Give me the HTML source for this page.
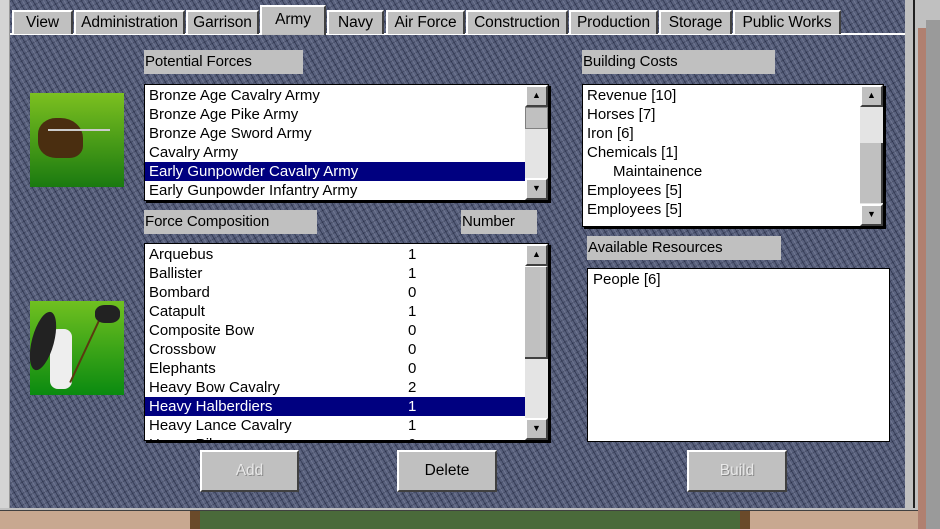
<!DOCTYPE html>
<html><head><meta charset="utf-8"><style>
*{box-sizing:border-box;margin:0;padding:0}
body{width:940px;height:529px;overflow:hidden;position:relative;background:#c0c0c0;font-family:"Liberation Sans",Arial,sans-serif;font-size:15px;color:#000}
.a{position:absolute}
.tex{background:#59617d;
background-image:repeating-linear-gradient(60deg,rgba(25,30,55,.5) 0 1px,transparent 1px 3px,rgba(150,155,180,.35) 3px 4px,transparent 4px 6px),repeating-linear-gradient(-30deg,rgba(20,25,45,.3) 0 1px,transparent 1px 5px)}
.panel{left:10px;top:33px;width:895px;height:477px;border-top:2px solid #fff}
.tab{top:10px;height:24px;background:#c0c0c0;border-top:2px solid #fff;border-left:2px solid #fff;border-right:2px solid #404040;text-align:center;line-height:21px;font-size:15.5px;letter-spacing:-.1px}
.lbl{background:#c0c0c0;height:24px;line-height:23px;padding-left:1px;letter-spacing:-.1px}
.list{background:#fff;border:1px solid #000;box-shadow:2px 2px 0 #000;overflow:hidden}
.row{height:19px;line-height:19px;padding-left:4px;white-space:nowrap;letter-spacing:0;position:relative}
.sel{background:#000080;color:#fff}
.sb{position:absolute;right:0;top:0;bottom:0;width:23px;background:#e4e4e4}
.btnx{position:absolute;left:0;width:23px;height:22px;background:#c0c0c0;border-top:2px solid #fff;border-left:2px solid #fff;border-right:2px solid #404040;border-bottom:2px solid #404040;font-size:9px;text-align:center;line-height:17px}
.btn{background:#c0c0c0;border-top:2px solid #fff;border-left:2px solid #fff;border-right:2px solid #404040;border-bottom:2px solid #404040;text-align:center;line-height:37px;font-size:15.5px}
.num{position:absolute;left:263px;top:0}
</style></head><body>
<div class="a" style="left:0;top:0;width:10px;height:510px;background:#d4d4d4;border-right:1px solid #999"></div>
<div class="a tex" style="left:10px;top:0;width:895px;height:34px"></div>
<div class="a panel tex"></div>
<div class="a tab" style="left:12px;width:61px">View</div>
<div class="a tab" style="left:74px;width:111px">Administration</div>
<div class="a tab" style="left:186px;width:73px">Garrison</div>
<div class="a tab" style="left:260px;width:66px;top:5px;height:30px;line-height:26px">Army</div>
<div class="a tab" style="left:327px;width:57px">Navy</div>
<div class="a tab" style="left:386px;width:79px">Air Force</div>
<div class="a tab" style="left:466px;width:102px">Construction</div>
<div class="a tab" style="left:569px;width:89px">Production</div>
<div class="a tab" style="left:659px;width:73px">Storage</div>
<div class="a tab" style="left:733px;width:108px">Public Works</div>
<div class="a" style="left:905px;top:0;width:10px;height:510px;background:#c0c0c0;border-right:2px solid #202020"></div>
<div class="a" style="left:915px;top:0;width:25px;height:529px;background:#c0c0c0"></div>
<div class="a" style="left:918px;top:28px;width:8px;height:501px;background:#b08070"></div>
<div class="a" style="left:926px;top:20px;width:14px;height:509px;background:#9a9a9a"></div>
<div class="a" style="left:0;top:510px;width:918px;height:19px;background:linear-gradient(90deg,#c8a890 0 190px,#6a4a2a 190px 200px,#4a6a3a 200px 740px,#6a4a2a 740px 750px,#c8a890 750px)"></div>
<div class="a" style="left:0;top:508px;width:918px;height:3px;background:#c0c0c0;border-bottom:1px solid #404040"></div>

<div class="a" style="left:30px;top:93px;width:94px;height:94px;background:linear-gradient(#7cc020,#1a7a10)"><div class="a" style="left:8px;top:25px;width:45px;height:40px;background:#4a2e10;border-radius:40% 50% 30% 40%"></div><div class="a" style="left:18px;top:36px;width:62px;height:2px;background:#ccc"></div></div>
<div class="a" style="left:30px;top:301px;width:94px;height:94px;background:linear-gradient(#70c020,#0a8a10)"><div class="a" style="left:20px;top:28px;width:22px;height:60px;background:#eee;border-radius:8px"></div><div class="a" style="left:2px;top:10px;width:22px;height:60px;background:#222;border-radius:50%;transform:rotate(15deg)"></div><div class="a" style="left:55px;top:10px;width:2px;height:75px;background:#5a3a10;transform:rotate(25deg)"></div><div class="a" style="left:65px;top:4px;width:25px;height:18px;background:#222;border-radius:40%"></div></div>

<div class="a lbl" style="left:144px;top:50px;width:159px">Potential Forces</div>
<div class="a list" style="left:144px;top:84px;width:405px;height:117px;padding-top:1px">
<div class="row">Bronze Age Cavalry Army</div><div class="row">Bronze Age Pike Army</div><div class="row">Bronze Age Sword Army</div><div class="row">Cavalry Army</div><div class="row sel" style="width:380px">Early Gunpowder Cavalry Army</div><div class="row">Early Gunpowder Infantry Army</div>
<div class="sb"><div class="btnx" style="top:0">▲</div><div class="a" style="left:0;top:22px;width:23px;height:22px;background:#c0c0c0;border:1px solid #808080"></div><div class="btnx" style="bottom:0">▼</div></div></div>

<div class="a lbl" style="left:144px;top:210px;width:173px">Force Composition</div>
<div class="a lbl" style="left:461px;top:210px;width:76px">Number</div>
<div class="a list" style="left:144px;top:243px;width:405px;height:198px;padding-top:1px">
<div class="row">Arquebus<span class="num">1</span></div><div class="row">Ballister<span class="num">1</span></div><div class="row">Bombard<span class="num">0</span></div><div class="row">Catapult<span class="num">1</span></div><div class="row">Composite Bow<span class="num">0</span></div><div class="row">Crossbow<span class="num">0</span></div><div class="row">Elephants<span class="num">0</span></div><div class="row">Heavy Bow Cavalry<span class="num">2</span></div><div class="row sel" style="width:380px">Heavy Halberdiers<span class="num">1</span></div><div class="row">Heavy Lance Cavalry<span class="num">1</span></div><div class="row">Heavy Pikemen<span class="num">0</span></div>
<div class="sb"><div class="btnx" style="top:0">▲</div><div class="a" style="left:0;top:22px;width:23px;height:93px;background:#c0c0c0;border-right:2px solid #404040;border-bottom:2px solid #404040;border-top:1px solid #fff"></div><div class="btnx" style="bottom:0">▼</div></div></div>

<div class="a lbl" style="left:582px;top:50px;width:193px">Building Costs</div>
<div class="a list" style="left:582px;top:84px;width:302px;height:143px;padding-top:1px">
<div class="row">Revenue [10]</div><div class="row">Horses [7]</div><div class="row">Iron [6]</div><div class="row">Chemicals [1]</div><div class="row" style="padding-left:30px">Maintainence</div><div class="row">Employees [5]</div><div class="row">Employees [5]</div>
<div class="sb"><div class="btnx" style="top:0">▲</div><div class="a" style="left:0;top:58px;width:23px;height:60px;background:#c0c0c0;border-right:2px solid #404040"></div><div class="btnx" style="bottom:0">▼</div></div></div>

<div class="a lbl" style="left:587px;top:236px;width:194px">Available Resources</div>
<div class="a" style="left:587px;top:268px;width:303px;height:174px;background:#fff;border:1px solid #000;padding:2px 5px">People [6]</div>

<div class="a btn" style="left:200px;top:450px;width:99px;height:42px;color:#e8e8e8;text-shadow:1px 1px 0 #888">Add</div>
<div class="a btn" style="left:397px;top:450px;width:100px;height:42px">Delete</div>
<div class="a btn" style="left:687px;top:450px;width:100px;height:42px;color:#e8e8e8;text-shadow:1px 1px 0 #888">Build</div>
</body></html>
